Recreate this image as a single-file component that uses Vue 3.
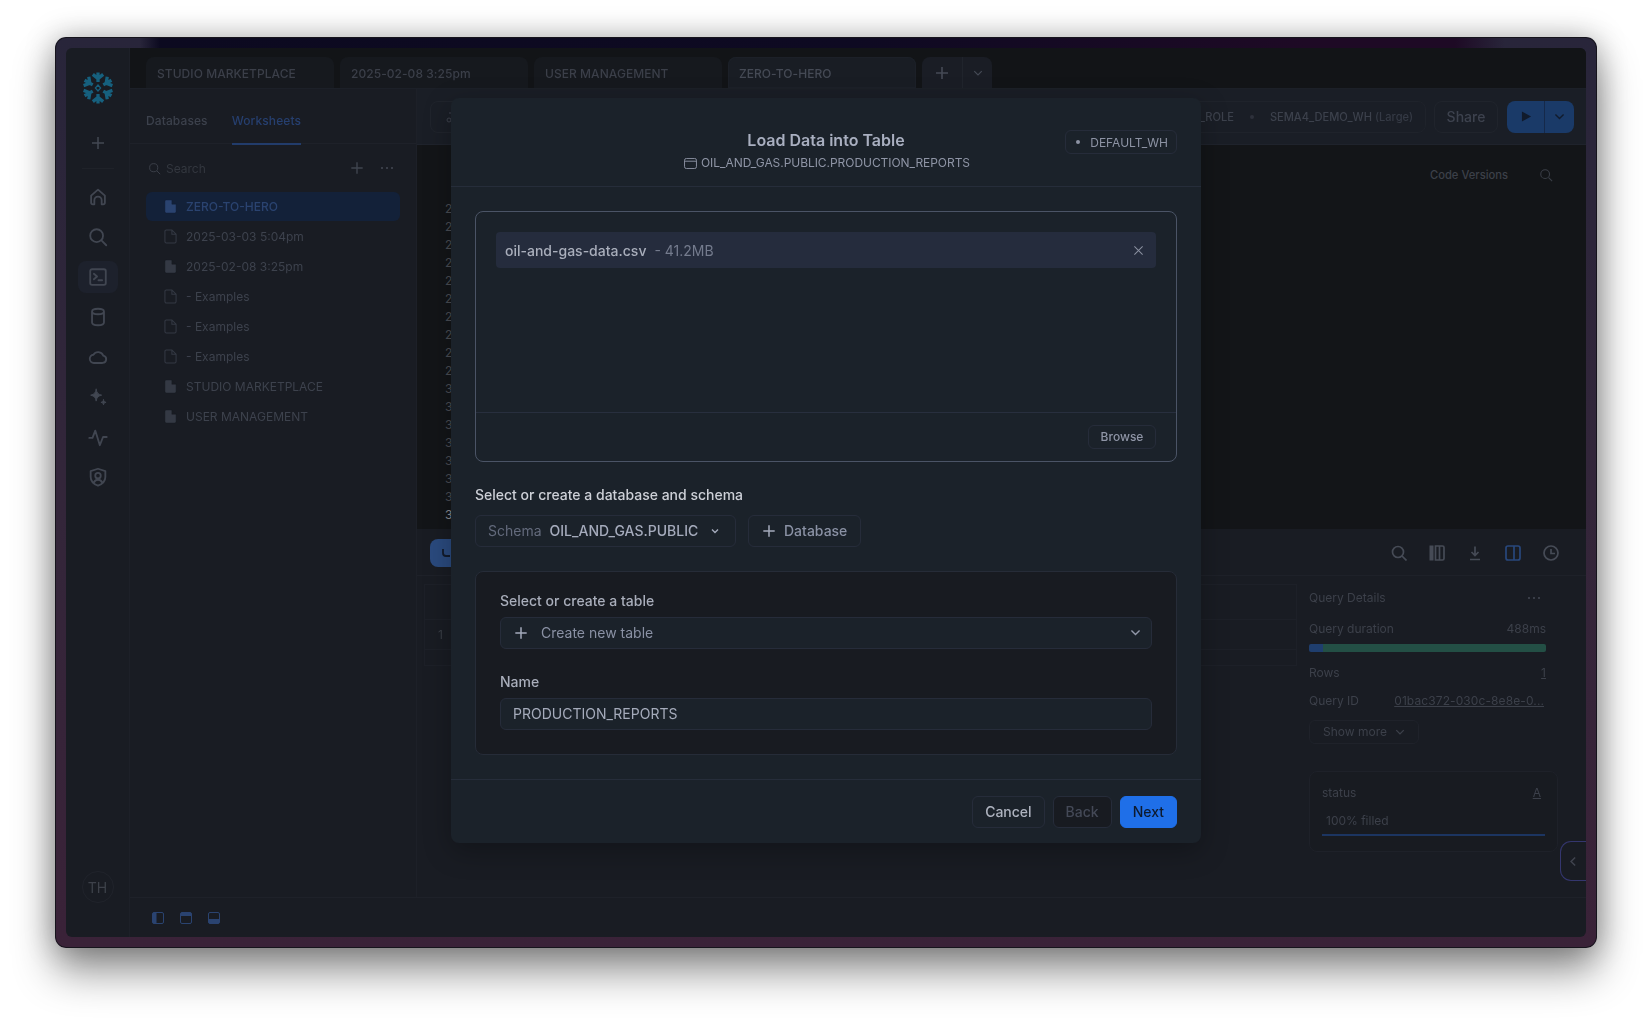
<script setup>
const tabs = ['STUDIO MARKETPLACE', '2025-02-08 3:25pm', 'USER MANAGEMENT', 'ZERO-TO-HERO']

const arms = [0, 60, 120, 180, 240, 300]

const navIcons = [
  { d: 'M4.5 10.5 12 4l7.5 6.5V18a2 2 0 0 1-2 2H16v-4.500a4 4 0 0 0-8 0V20H6.500a2 2 0 0 1-2-2z' },
  { d: 'M10.500 3.500a7 7 0 1 1 0 14 7 7 0 0 1 0-14zM15.500 15.500 21 21' },
  { d: 'M5.500 3.500h13a2 2 0 0 1 2 2v13a2 2 0 0 1-2 2h-13a2 2 0 0 1-2-2v-13a2 2 0 0 1 2-2zM7.500 8.500l3.500 3-3.500 3M12.500 15.500h4', active: true },
  { d: 'M12 3c4 0 6.500 1.200 6.500 3v12c0 1.800-2.500 3-6.500 3s-6.500-1.200-6.500-3V6c0-1.800 2.500-3 6.500-3zM5.500 6c0 1.800 2.500 3 6.500 3s6.500-1.200 6.500-3' },
  { d: 'M17 18.500H7.500a4.500 4.500 0 0 1-.5-8.970A6 6 0 0 1 17.800 10.600 4 4 0 0 1 17 18.500z' },
  { d: 'M10 3.500c.6 4 2 5.500 6 6.500-4 1-5.400 2.500-6 6.500-.6-4-2-5.500-6-6.500 4-1 5.400-2.500 6-6.500zM18 15c.3 1.800 1 2.500 2.800 2.800-1.800.3-2.500 1-2.800 2.700-.3-1.700-1-2.400-2.800-2.700 1.800-.3 2.500-1 2.800-2.800z', filled: true },
  { d: 'M2.500 13H6l3-8 5 16 3.500-9h4' },
  { d: 'M12 3l8 2.500V12c0 4.500-3.300 7.700-8 9.500-4.700-1.800-8-5-8-9.500V5.500zM12 7.500a3 3 0 1 1 0 6 3 3 0 0 1 0-6zM7.500 18c1-2 2.600-3 4.500-3s3.500 1 4.500 3' }
]

const sheets = [
  { name: 'ZERO-TO-HERO', filled: true, selected: true },
  { name: '2025-03-03 5:04pm' },
  { name: '2025-02-08 3:25pm', filled: true },
  { name: '- Examples' },
  { name: '- Examples' },
  { name: '- Examples' },
  { name: 'STUDIO MARKETPLACE', filled: true },
  { name: 'USER MANAGEMENT', filled: true }
]

const lineNumbers = Array.from({ length: 18 }, (_, i) => 20 + i)
</script>

<template>
  <div class="page">
    <div class="window">
      <div class="app">
        <nav class="nav">
          <svg class="logo" viewBox="-17 -17 34 34" width="32" height="32">
            <g v-for="a in arms" :key="a" :transform="`rotate(${a})`">
              <path class="logo-arm" d="M0 -6.500V-16.500M-5.500 -14.500 0 -10 5.500 -14.500" />
            </g>
            <path class="logo-core" d="M0 -3.200 2.800 0 0 3.200 -2.800 0z" />
          </svg>
          <svg class="nav-plus" viewBox="0 0 16 16" width="16" height="16">
            <path d="M8 2v12M2 8h12" />
          </svg>
          <div class="nav-rule"></div>
          <div v-for="(icon, i) in navIcons" :key="i" class="nav-item" :class="{ active: icon.active }">
            <svg viewBox="0 0 24 24" width="22" height="22" :class="{ filled: icon.filled }">
              <path :d="icon.d" />
            </svg>
          </div>
          <div class="avatar">TH</div>
        </nav>

        <div class="main">
          <div class="strip">
            <div v-for="(t, i) in tabs" :key="t" class="tab" :class="{ current: i === 3 }">{{ t }}</div>
            <div class="tab-tools">
              <span class="tab-tool">
                <svg viewBox="0 0 16 16" width="16" height="16"><path d="M8 2v12M2 8h12" /></svg>
              </span>
              <span class="tab-tool small">
                <svg viewBox="0 0 16 16" width="12" height="12"><path d="M3 5.500l5 5 5-5" /></svg>
              </span>
            </div>
          </div>

          <div class="body">
            <aside class="sidebar">
              <div class="side-tabs">
                <span class="side-tab">Databases</span>
                <span class="side-tab on">Worksheets</span>
              </div>
              <div class="side-search">
                <svg class="glass" viewBox="0 0 16 16" width="13" height="13">
                  <circle cx="7" cy="7" r="5" /><path d="M11 11l4 4" />
                </svg>
                <span class="search-text">Search</span>
                <svg class="side-plus" viewBox="0 0 16 16" width="14" height="14"><path d="M8 1.500v13M1.500 8h13" /></svg>
                <span class="dots"><i></i><i></i><i></i></span>
              </div>
              <ul class="sheets">
                <li v-for="(s, i) in sheets" :key="i" class="sheet" :class="{ selected: s.selected }">
                  <svg viewBox="0 0 14 16" width="13" height="15" :class="{ solid: s.filled }">
                    <path d="M2.500 1h6L13 5.500V13.500a1.500 1.500 0 0 1-1.500 1.500h-9A1.500 1.500 0 0 1 1 13.500v-11A1.500 1.500 0 0 1 2.500 1zM8.500 1v4.500H13" />
                  </svg>
                  <span>{{ s.name }}</span>
                </li>
              </ul>
            </aside>

            <section class="workspace">
              <div class="toolbar">
                <div class="filter-chip">
                  <svg viewBox="0 0 16 16" width="16" height="16">
                    <path d="M5 4h11M9 11h7" /><circle cx="5" cy="11" r="2" />
                  </svg>
                </div>
                <div class="wh-chip">
                  <span>_ROLE</span>
                  <i class="wh-dot"></i>
                  <span>SEMA4_DEMO_WH <em>(Large)</em></span>
                </div>
                <div class="share">Share</div>
                <div class="run">
                  <span class="run-main">
                    <svg viewBox="0 0 12 14" width="11" height="13"><path d="M1 1.500 11 7 1 12.500z" /></svg>
                  </span>
                  <span class="run-more">
                    <svg viewBox="0 0 16 16" width="13" height="13"><path d="M3 5.500l5 5 5-5" /></svg>
                  </span>
                </div>
              </div>

              <div class="editor">
                <div class="gutter">
                  <div v-for="n in lineNumbers" :key="n" class="line-no" :class="{ live: n === 37 }">{{ n }}</div>
                </div>
                <div class="versions">
                  <span>Code Versions</span>
                  <svg class="glass" viewBox="0 0 16 16" width="14" height="14">
                    <circle cx="7" cy="7" r="5" /><path d="M11 11l4 4" />
                  </svg>
                </div>
              </div>

              <div class="results">
                <div class="results-bar">
                  <div class="results-tab">
                    <svg viewBox="0 0 16 16" width="16" height="16"><path d="M3 4v4a3 3 0 0 0 3 3h4" /></svg>
                  </div>
                  <div class="bar-icons">
                    <svg viewBox="0 0 16 16" width="16" height="16">
                      <circle cx="7" cy="7" r="5.500" /><path d="M11 11l4.500 4.500" />
                    </svg>
                    <svg viewBox="0 0 16 16" width="16" height="16">
                      <path class="fill" d="M.5 .5h4v15h-4z" />
                      <path d="M6.500 1h7a1.500 1.500 0 0 1 1.500 1.500v11a1.500 1.500 0 0 1-1.500 1.500h-7zM10.500 1v14" />
                    </svg>
                    <svg viewBox="0 0 16 16" width="16" height="16">
                      <path d="M8 1.500v8.500M4.500 7 8 10.500 11.500 7M3 14.500h10" />
                    </svg>
                    <svg class="blue" viewBox="0 0 16 16" width="16" height="16">
                      <rect x="1" y="1" width="14" height="14" rx="2" /><path d="M9 1v14" />
                    </svg>
                    <svg viewBox="0 0 16 16" width="16" height="16">
                      <circle cx="8" cy="8" r="7" /><path d="M8 4v4.500h4" />
                    </svg>
                  </div>
                </div>
                <div class="results-body">
                  <div class="grid">
                    <div class="grid-row head"></div>
                    <div class="grid-row"><span class="row-no">1</span></div>
                    <div class="grid-row tail"></div>
                  </div>
                  <div class="details">
                    <div class="d-row title">
                      <span>Query Details</span>
                      <span class="dots"><i></i><i></i><i></i></span>
                    </div>
                    <div class="d-row duration"><span>Query duration</span><span>488ms</span></div>
                    <div class="timing"><i class="t-compile"></i><i class="t-exec"></i></div>
                    <div class="d-row rows"><span>Rows</span><u>1</u></div>
                    <div class="d-row qid"><span>Query ID</span><u>01bac372-030c-8e8e-0...</u></div>
                    <div class="show-more">
                      Show more
                      <svg viewBox="0 0 16 16" width="12" height="12"><path d="M3 5.500l5 5 5-5" /></svg>
                    </div>
                    <div class="stat-card">
                      <div class="stat-head"><span>status</span><u>A</u></div>
                      <div class="stat-fill">100% filled</div>
                    </div>
                  </div>
                </div>
                <div class="collapse">
                  <svg viewBox="0 0 16 16" width="13" height="13"><path d="M10 3 5 8l5 5" /></svg>
                </div>
              </div>
            </section>
          </div>

          <footer class="foot">
            <svg viewBox="0 0 12 12" width="12" height="12"><rect x=".5" y=".5" width="11" height="11" rx="1.500" /><path class="fill" d="M.5 2a1.500 1.500 0 0 1 1.500-1.500h2.500v11H2A1.500 1.500 0 0 1 .5 10z" /></svg>
            <svg viewBox="0 0 12 12" width="12" height="12"><rect x=".5" y=".5" width="11" height="11" rx="1.500" /><path class="fill" d="M.5 2A1.500 1.500 0 0 1 2 .5h8A1.500 1.500 0 0 1 11.500 2v2H.5z" /></svg>
            <svg viewBox="0 0 12 12" width="12" height="12"><rect x=".5" y=".5" width="11" height="11" rx="1.500" /><path class="fill" d="M.5 7h11v3a1.500 1.500 0 0 1-1.500 1.500H2A1.500 1.500 0 0 1 .5 10z" /></svg>
          </footer>
        </div>
      </div>

      <div class="modal">
        <header class="m-head">
          <div class="m-titles">
            <div class="m-title">Load Data into Table</div>
            <div class="m-sub">
              <svg viewBox="0 0 14 12" width="13" height="11">
                <rect x=".5" y=".5" width="13" height="11" rx="2" /><path d="M.5 3.500h13" />
              </svg>
              OIL_AND_GAS.PUBLIC.PRODUCTION_REPORTS
            </div>
          </div>
          <div class="m-badge"><i></i>DEFAULT_WH</div>
        </header>

        <div class="m-body">
          <div class="drop">
            <div class="drop-list">
              <div class="file">
                <span class="file-name">oil-and-gas-data.csv</span>
                <span class="file-size">- 41.2MB</span>
                <svg viewBox="0 0 12 12" width="11" height="11"><path d="M1.500 1.500l9 9M10.500 1.500l-9 9" /></svg>
              </div>
            </div>
            <div class="drop-foot"><button class="browse">Browse</button></div>
          </div>

          <div class="section-label">Select or create a database and schema</div>
          <div class="schema-row">
            <div class="schema-select">
              <span class="schema-key">Schema</span>
              <span class="schema-val">OIL_AND_GAS.PUBLIC</span>
              <svg viewBox="0 0 16 16" width="12" height="12"><path d="M4 6l4 4 4-4" /></svg>
            </div>
            <div class="db-btn">
              <svg viewBox="0 0 16 16" width="14" height="14"><path d="M8 1.500v13M1.500 8h13" /></svg>
              Database
            </div>
          </div>

          <div class="table-card">
            <label class="field-label">Select or create a table</label>
            <div class="field">
              <svg class="f-plus" viewBox="0 0 16 16" width="14" height="14"><path d="M8 1.500v13M1.500 8h13" /></svg>
              <span>Create new table</span>
              <svg class="f-chev" viewBox="0 0 16 16" width="13" height="13"><path d="M3 5.500l5 5 5-5" /></svg>
            </div>
            <label class="field-label second">Name</label>
            <div class="field input">PRODUCTION_REPORTS</div>
          </div>
        </div>

        <footer class="m-foot">
          <button class="btn">Cancel</button>
          <button class="btn back">Back</button>
          <button class="btn next">Next</button>
        </footer>
      </div>
    </div>
  </div>
</template>

<style>
html,
body {
  margin: 0;
  background: #fff;
}
</style>

<style scoped>
* {
  box-sizing: border-box;
}

.page {
  width: 1652px;
  height: 1021px;
  padding: 37px 0 0 55px;
  overflow: hidden;
  background: #fff;
  font-family: Inter, "Noto Sans", sans-serif;
  font-size: 12px;
}

.window {
  position: relative;
  width: 1542px;
  height: 911px;
  padding: 11px;
  border-radius: 11px;
  background:
    linear-gradient(90deg, transparent 0, transparent 85px, #0c0a20 105px, #0e0a22 800px, #1e0a25 1250px, #1e0a25 1400px, transparent 1450px) top / 100% 11px no-repeat,
    linear-gradient(180deg, #28253a 0, #33263a 50%, #3a2238 100%);
  box-shadow: inset 0 0 0 1px #16141c, 0 24px 42px rgba(0, 0, 0, .42), 0 0 30px rgba(0, 0, 0, .28);
}

.app {
  display: flex;
  height: 100%;
  border-radius: 6px;
  overflow: hidden;
  background: #191c23;
  filter: blur(.4px);
}

/* left rail */
.nav {
  flex: 0 0 64px;
  display: flex;
  flex-direction: column;
  align-items: center;
  padding-top: 24px;
  border-right: 1px solid #1d2028;
}

.logo {
  flex: none;
}

.logo-arm {
  fill: none;
  stroke: #16607e;
  stroke-width: 3.500;
}

.logo-core {
  fill: none;
  stroke: #16607e;
  stroke-width: 1.300;
}

.nav-plus {
  flex: none;
  margin-top: 31px;
}

.nav-plus path {
  fill: none;
  stroke: #434853;
  stroke-width: 1.500;
}

.nav-rule {
  flex: none;
  width: 32px;
  height: 1px;
  margin: 17px 0 12px;
  background: #1f2229;
}

.nav-item {
  flex: none;
  display: flex;
  align-items: center;
  justify-content: center;
  width: 40px;
  height: 32px;
  margin-bottom: 8px;
  border-radius: 8px;
}

.nav-item.active {
  background: #1d212c;
}

.nav-item path {
  fill: none;
  stroke: #414651;
  stroke-width: 2;
  stroke-linejoin: round;
  stroke-linecap: round;
}

.nav-item .filled path {
  fill: #414651;
  stroke-width: 1;
}

.avatar {
  display: flex;
  align-items: center;
  justify-content: center;
  width: 32px;
  height: 32px;
  margin-top: auto;
  margin-bottom: 34px;
  border: 1px solid #20232b;
  border-radius: 50%;
  color: #3d414a;
  font-size: 14px;
}

.main {
  flex: 1;
  min-width: 0;
  display: flex;
  flex-direction: column;
}

/* worksheet tabs */
.strip {
  flex: 0 0 41px;
  display: flex;
  align-items: flex-end;
  gap: 6px;
  padding-left: 16px;
  background: #121417;
  border-bottom: 1px solid #1c2028;
}

.tab {
  width: 188px;
  height: 31px;
  padding: 0 11px;
  border-radius: 8px 8px 0 0;
  background: #16191e;
  color: #3b3f49;
  font-size: 12px;
  font-weight: 500;
  letter-spacing: .05px;
  line-height: 33px;
}

.tab.current {
  background: #191d24;
  box-shadow: inset 0 0 0 1px #1c2028;
  color: #454a55;
}

.tab-tools {
  display: flex;
  height: 31px;
  border-radius: 8px 8px 0 0;
  background: #1a1d25;
}

.tab-tool {
  display: flex;
  align-items: center;
  justify-content: center;
  width: 41px;
  border-right: 1px solid #20242c;
}

.tab-tool.small {
  width: 29px;
  border-right: 0;
}

.tab-tool path {
  fill: none;
  stroke: #454a55;
  stroke-width: 1.600;
}

.body {
  flex: 1;
  min-height: 0;
  display: flex;
}

/* worksheets panel */
.sidebar {
  flex: 0 0 287px;
  border-right: 1px solid #1d2028;
}

.side-tabs {
  display: flex;
  gap: 24px;
  height: 55px;
  padding-left: 16px;
  border-bottom: 1px solid #1e2129;
}

.side-tab {
  padding-top: 24px;
  color: #3c414c;
  font-size: 12px;
  font-weight: 500;
  letter-spacing: .1px;
  line-height: 16px;
}

.side-tab.on {
  height: 56px;
  border-bottom: 2px solid #223c6b;
  color: #263f6f;
}

.side-search {
  display: flex;
  align-items: center;
  height: 48px;
  padding: 0 23px 0 18px;
  color: #33373f;
  font-size: 12px;
}

.glass circle,
.glass path {
  fill: none;
  stroke: #3b3f48;
  stroke-width: 1.200;
}

.search-text {
  margin-left: 5px;
}

.side-plus {
  margin-left: auto;
  margin-right: 17px;
}

.side-plus path {
  fill: none;
  stroke: #3f444f;
  stroke-width: 1.600;
}

.dots {
  display: inline-flex;
  gap: 3px;
}

.dots i {
  width: 2px;
  height: 2px;
  border-radius: 50%;
  background: #444954;
}

.sheets {
  margin: 0;
  padding: 0 16px;
  list-style: none;
}

.sheet {
  display: flex;
  align-items: center;
  gap: 9px;
  height: 30px;
  padding-left: 18px;
  border-radius: 6px;
  color: #3d424d;
  font-size: 12px;
}

.sheet.selected {
  height: 29px;
  background: #132139;
  color: #2a4370;
  font-weight: 500;
}

.sheet path {
  fill: none;
  stroke: #343944;
  stroke-width: 1.100;
}

.sheet .solid path {
  fill: #343944;
  stroke: #191c23;
  stroke-width: .5;
}

.sheet.selected .solid path {
  fill: #2a4370;
  stroke: #132139;
}

/* workspace */
.workspace {
  flex: 1;
  min-width: 0;
  display: flex;
  flex-direction: column;
}

.toolbar {
  flex: 0 0 56px;
  display: flex;
  align-items: center;
  padding: 0 12px 0 13px;
  background: #1a1e26;
  border-bottom: 1px solid #1f232c;
}

.filter-chip {
  display: flex;
  align-items: center;
  width: 80px;
  height: 32px;
  padding-left: 13px;
  border: 1px solid #20242c;
  border-radius: 8px;
}

.filter-chip path,
.filter-chip circle {
  fill: none;
  stroke: #3d414c;
  stroke-width: 1;
}

.wh-chip {
  display: flex;
  align-items: center;
  justify-content: flex-end;
  gap: 16px;
  width: 320px;
  height: 32px;
  margin-left: auto;
  padding-right: 12px;
  border: 1px solid #1f232b;
  border-radius: 8px;
  color: #3c414c;
  font-size: 11.100px;
  font-weight: 500;
}

.wh-chip em {
  font-style: normal;
  color: #353a45;
}

.wh-dot {
  width: 4px;
  height: 4px;
  border-radius: 50%;
  background: #2d313b;
}

.share {
  display: flex;
  align-items: center;
  justify-content: center;
  width: 64px;
  height: 32px;
  margin-left: 8px;
  border: 1px solid #20242c;
  border-radius: 8px;
  color: #3d424e;
  font-size: 14px;
  font-weight: 500;
}

.run {
  display: flex;
  height: 32px;
  margin-left: 9px;
  border-radius: 8px;
  overflow: hidden;
  background: #1a3a68;
}

.run-main,
.run-more {
  display: flex;
  align-items: center;
  justify-content: center;
}

.run-main {
  width: 38px;
  padding-left: 1px;
  border-right: 1px solid #15294a;
}

.run-main path {
  fill: #111b2c;
}

.run-more {
  width: 29px;
}

.run-more path {
  fill: none;
  stroke: #111b2c;
  stroke-width: 1.700;
}

.editor {
  flex: 0 0 384px;
  display: flex;
  justify-content: space-between;
  background: #131518;
}

.gutter {
  margin-left: 28px;
  padding-top: 55px;
}

.line-no {
  height: 18px;
  color: #4a4d54;
  font-size: 12px;
  line-height: 18px;
}

.line-no.live {
  color: #8b8e95;
}

.versions {
  display: flex;
  align-items: flex-start;
  gap: 31px;
  height: 46px;
  padding: 23px 33px 0 0;
  color: #3c4049;
  font-size: 11.200px;
  font-weight: 500;
  line-height: 14px;
}

.results {
  position: relative;
  flex: 1;
  min-height: 0;
  display: flex;
  flex-direction: column;
}

.results-bar {
  flex: 0 0 47px;
  display: flex;
  align-items: center;
  padding: 2px 27px 0 13px;
  border-bottom: 1px solid #1e2129;
}

.results-tab {
  width: 80px;
  height: 28px;
  padding: 6px 10px;
  border-radius: 8px;
  background: #2a4a7e;
}

.results-tab path {
  fill: none;
  stroke: #121b2c;
  stroke-width: 1.800;
}

.bar-icons {
  display: flex;
  gap: 22px;
  margin-left: auto;
}

.bar-icons path,
.bar-icons circle,
.bar-icons rect {
  fill: none;
  stroke: #464b56;
  stroke-width: 1.700;
}

.bar-icons .fill {
  fill: #464b56;
  stroke: none;
}

.bar-icons .blue rect,
.bar-icons .blue path {
  stroke: #28477c;
}

.results-body {
  flex: 1;
  display: flex;
  align-items: flex-start;
}

.grid {
  width: 873px;
  margin: 8px 0 0 7px;
  border: 1px solid #1d2028;
}

.grid-row {
  height: 30px;
  border-bottom: 1px solid #1d2028;
  color: #3a3e47;
  line-height: 30px;
}

.grid-row.head {
  height: 35px;
}

.grid-row.tail {
  height: 15px;
  border-bottom: 0;
}

.row-no {
  margin-left: 13px;
}

.details {
  width: 249px;
  margin-left: 12px;
  padding-top: 14px;
  color: #3c404a;
  font-size: 12px;
  line-height: 16px;
}

.d-row {
  display: flex;
  justify-content: space-between;
  align-items: center;
  width: 237px;
}

.d-row.title .dots {
  margin-right: 6px;
}

.d-row.duration {
  margin-top: 15px;
}

.timing {
  display: flex;
  width: 237px;
  height: 8px;
  margin-top: 7px;
  border-radius: 2px;
  overflow: hidden;
}

.t-compile {
  width: 14px;
  background: #1f3e6e;
}

.t-exec {
  flex: 1;
  background: #234f45;
}

.d-row.rows {
  margin-top: 13px;
}

.d-row.qid {
  margin-top: 12px;
}

.d-row.qid u {
  margin-right: 2px;
  letter-spacing: .1px;
  white-space: nowrap;
}

.show-more {
  display: flex;
  align-items: center;
  gap: 7px;
  width: 110px;
  height: 24px;
  margin-top: 11px;
  padding-left: 13px;
  border: 1px solid #1f222a;
  border-radius: 6px;
}

.show-more path {
  fill: none;
  stroke: #3c404a;
  stroke-width: 1.800;
}

.stat-card {
  height: 81px;
  margin-top: 27px;
  padding: 13px 12px 0 12px;
  border: 1px solid #1e2129;
  border-radius: 8px;
  background: #181b21;
}

.stat-head {
  display: flex;
  justify-content: space-between;
  padding-right: 4px;
}

.stat-fill {
  height: 23px;
  margin-top: 12px;
  padding-left: 4px;
  border-bottom: 2px solid #1c3561;
}

.collapse {
  position: absolute;
  top: 312px;
  right: 0;
  display: flex;
  align-items: center;
  padding-left: 6px;
  width: 26px;
  height: 40px;
  border: 1px solid #34366e;
  border-right: 0;
  border-radius: 11px 0 0 11px;
  background: #191c23;
}

.collapse path {
  fill: none;
  stroke: #40444f;
  stroke-width: 1.800;
}

.foot {
  flex: 0 0 40px;
  display: flex;
  align-items: center;
  gap: 16px;
  padding-left: 22px;
  border-top: 1px solid #1e2129;
}

.foot rect {
  fill: none;
  stroke: #2a4370;
}

.foot .fill {
  fill: #2a4370;
}

/* load data modal */
.modal {
  position: absolute;
  top: 61px;
  left: 396px;
  display: flex;
  flex-direction: column;
  width: 750px;
  height: 745px;
  border-radius: 8px;
  background: #1b222a;
  box-shadow: 0 8px 28px rgba(0, 0, 0, .28);
}

.m-head {
  flex: 0 0 89px;
  display: grid;
  grid-template-columns: 1fr auto 1fr;
  align-items: start;
  padding: 30px 24px 0;
  border-bottom: 1px solid #262d3a;
}

.m-titles {
  grid-column: 2;
  text-align: center;
}

.m-title {
  color: #a9afc0;
  font-size: 16px;
  font-weight: 600;
  line-height: 24px;
}

.m-sub {
  display: flex;
  align-items: center;
  gap: 4px;
  margin-top: 1px;
  padding-left: 2px;
  color: #8f95a6;
  font-size: 12px;
  letter-spacing: -.05px;
  line-height: 20px;
}

.m-sub rect,
.m-sub path {
  fill: none;
  stroke: #8f95a6;
}

.m-badge {
  grid-column: 3;
  justify-self: end;
  display: flex;
  align-items: center;
  gap: 10px;
  height: 24px;
  margin-top: 2px;
  padding: 0 8px 0 10px;
  border: 1px solid #262c3a;
  border-radius: 6px;
  color: #8d93a4;
  font-size: 12px;
}

.m-badge i {
  width: 4px;
  height: 4px;
  border-radius: 50%;
  background: #8d93a4;
}

.m-body {
  flex: 1;
  padding: 24px 24px 0;
}

.drop {
  display: flex;
  flex-direction: column;
  height: 251px;
  border: 1px solid #4b5466;
  border-radius: 8px;
}

.drop-list {
  flex: 1;
  padding: 20px 20px 0;
}

.file {
  display: flex;
  align-items: center;
  height: 36px;
  padding: 0 12px 0 9px;
  border-radius: 4px;
  background: #252c3d;
  font-size: 14px;
}

.file-name {
  color: #a9aebb;
  font-weight: 500;
}

.file-size {
  margin-left: 8px;
  color: #747b8d;
}

.file svg {
  margin-left: auto;
}

.file path {
  fill: none;
  stroke: #8a90a0;
  stroke-width: 1.100;
}

.drop-foot {
  flex: 0 0 49px;
  display: flex;
  align-items: center;
  justify-content: flex-end;
  padding-right: 20px;
  border-top: 1px solid #282f3e;
}

.browse {
  width: 68px;
  height: 24px;
  padding: 0 0 1px;
  border: 1px solid #262c3a;
  border-radius: 6px;
  background: transparent;
  color: #8f95a6;
  font: 500 12px Inter, sans-serif;
}

.section-label {
  margin-top: 23px;
  color: #cdd0d7;
  font-size: 14px;
  font-weight: 500;
  line-height: 20px;
}

.schema-row {
  display: flex;
  gap: 12px;
  margin-top: 10px;
}

.schema-select,
.db-btn {
  display: flex;
  align-items: center;
  height: 32px;
  padding-bottom: 1px;
  border: 1px solid #262c3a;
  border-radius: 6px;
  font-size: 14px;
}

.schema-select {
  width: 261px;
  padding-left: 12px;
}

.schema-key {
  color: #636a7c;
}

.schema-val {
  margin-left: 8px;
  color: #a5abbc;
  font-weight: 500;
}

.schema-select svg {
  margin-left: 11px;
}

.schema-select path {
  fill: none;
  stroke: #a5abbc;
  stroke-width: 1.800;
}

.db-btn {
  gap: 8px;
  width: 113px;
  padding-left: 13px;
  color: #8a91a4;
  font-weight: 500;
}

.db-btn path {
  fill: none;
  stroke: #a5abbc;
  stroke-width: 1.700;
}

.table-card {
  height: 184px;
  margin-top: 24px;
  padding: 19px 24px 0;
  border: 1px solid #262c38;
  border-radius: 8px;
  background: #181b21;
}

.field-label {
  display: block;
  color: #a9aebb;
  font-size: 14px;
  font-weight: 500;
  line-height: 20px;
}

.field-label.second {
  margin-top: 23px;
}

.field {
  display: flex;
  align-items: center;
  height: 32px;
  margin-top: 6px;
  padding: 0 9px 1px 12px;
  border: 1px solid #262c3a;
  border-radius: 6px;
  background: #1b222a;
  color: #8a91a4;
  font-size: 14px;
}

.f-plus {
  margin: 0 13px 0 1px;
}

.f-plus path {
  fill: none;
  stroke: #a5abbc;
  stroke-width: 1.700;
}

.f-chev {
  margin-left: auto;
}

.f-chev path {
  fill: none;
  stroke: #9298a9;
  stroke-width: 1.700;
}

.field.input {
  color: #a5abbb;
}

.m-foot {
  flex: 0 0 64px;
  display: flex;
  justify-content: flex-end;
  gap: 8px;
  padding: 16px 24px 0;
  border-top: 1px solid #262d3a;
}

.btn {
  height: 32px;
  padding: 0 12px 1px;
  border: 1px solid #262c3a;
  border-radius: 6px;
  background: transparent;
  color: #aeb3bf;
  font: 500 14px Inter, sans-serif;
}

.btn.back {
  background: #181b21;
  color: #444957;
}

.btn.next {
  border-color: #1f6fe8;
  background: #1f6fe8;
  color: #0d1a2e;
}
</style>
